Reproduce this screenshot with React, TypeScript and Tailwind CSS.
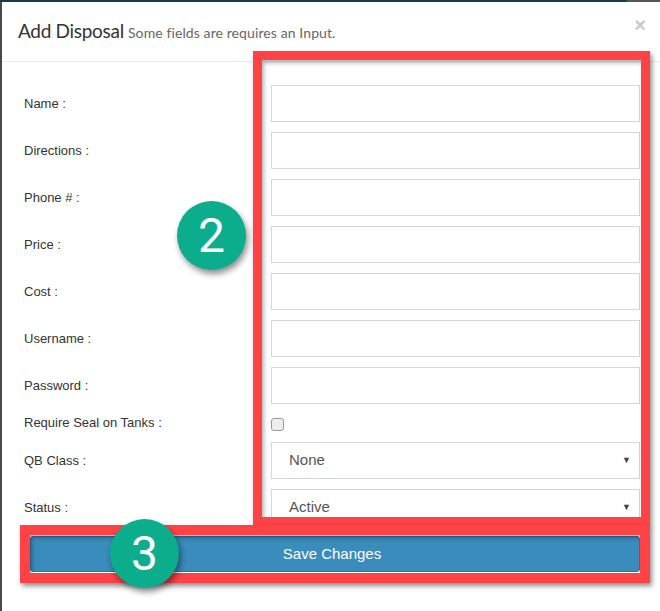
import React from 'react';

const fields = ['Name :', 'Directions :', 'Phone # :', 'Price :', 'Cost :', 'Username :', 'Password :'];

const Badge: React.FC<{ n: string; className: string }> = ({ n, className }) => (
    <div
        className={`absolute w-[69px] h-[69px] rounded-full bg-[#0bad8c] text-white flex items-center justify-center text-[48px] leading-none shadow-[2px_4px_6px_rgba(0,0,0,0.45)] font-['Roboto',sans-serif] ${className}`}
    >
        {n}
    </div>
);

const SelectBox: React.FC<{ value: string }> = ({ value }) => (
    <div className="w-[369px] h-[37px] border border-[#d3d6dd] flex items-center justify-between pl-[17px] pr-[8px] text-[15px] text-[#555] bg-white">
        <span>{value}</span>
        <span className="text-[9px] text-[#444]">▼</span>
    </div>
);

export default function App() {
    return (
        <div className="relative w-[660px] h-[611px] overflow-hidden bg-white font-['Liberation_Sans',Arial,sans-serif]">
            {/* backdrop edges */}
            <div className="flex h-[2px]">
                <div className="w-[627px] bg-[#1d3a4b]" />
                <div className="flex-1 bg-[#555]" />
            </div>
            <div className="flex h-[609px]">
                <div className="w-[2px] bg-[#4a4a4a]" />

                {/* Modal */}
                <div className="flex-1 bg-white flex flex-col">
                    <div className="h-[60px] border-b border-[#ebebeb] flex items-center pl-[16px] pr-[14px] justify-between">
                        <div className="font-['Lato',sans-serif] text-[#333]">
                            <span className="text-[19px] tracking-[-0.3px]">Add Disposal</span>{' '}
                            <span className="text-[14px] text-[#666] tracking-[0.1px]">Some fields are requires an Input.</span>
                        </div>
                        <span className="text-[20px] font-bold text-[#c9c9c9] -mt-[14px]">×</span>
                    </div>

                    <div className="pl-[22px] pt-[23px] flex flex-col text-[13px] text-[#333]">
                        {fields.map(f => (
                            <div key={f} className="flex items-center h-[37px] mb-[10px]">
                                <div className="w-[247px]">{f}</div>
                                <div className="w-[369px] h-[37px] border border-[#d3d6dd] bg-white" />
                            </div>
                        ))}
                        <div className="flex items-center h-[18px] mb-[10px]">
                            <div className="w-[247px]">Require Seal on Tanks :</div>
                            <div className="w-[13px] h-[13px] mt-[2px] rounded-[3px] border border-[#999] bg-[#eee]" />
                        </div>
                        <div className="flex items-center h-[37px] mb-[10px]">
                            <div className="w-[247px]">QB Class :</div>
                            <SelectBox value="None" />
                        </div>
                        <div className="flex items-center h-[37px] mb-[10px]">
                            <div className="w-[247px]">Status :</div>
                            <SelectBox value="Active" />
                        </div>
                        <button className="ml-[6px] w-[610px] h-[36px] pr-[6px] bg-[#3a8cbc] border border-[#2e77a5] rounded-[3px] text-white text-[15px]">
                            Save Changes
                        </button>
                    </div>
                </div>
            </div>

            {/* Annotation boxes */}
            <div className="absolute left-[253px] top-[51px] w-[397px] h-[475px] border-[9px] border-[#fe4346] shadow-[2px_3px_5px_rgba(0,0,0,0.45),inset_2px_3px_4px_rgba(0,0,0,0.3)]" />
            <div className="absolute left-[20px] top-[525px] w-[630px] h-[58px] border-[10px] border-[#fe4346] shadow-[2px_3px_5px_rgba(0,0,0,0.45),inset_2px_3px_4px_rgba(0,0,0,0.3)]" />

            <Badge n="2" className="left-[177px] top-[201px]" />
            <Badge n="3" className="left-[110px] top-[519px]" />
        </div>
    );
}
